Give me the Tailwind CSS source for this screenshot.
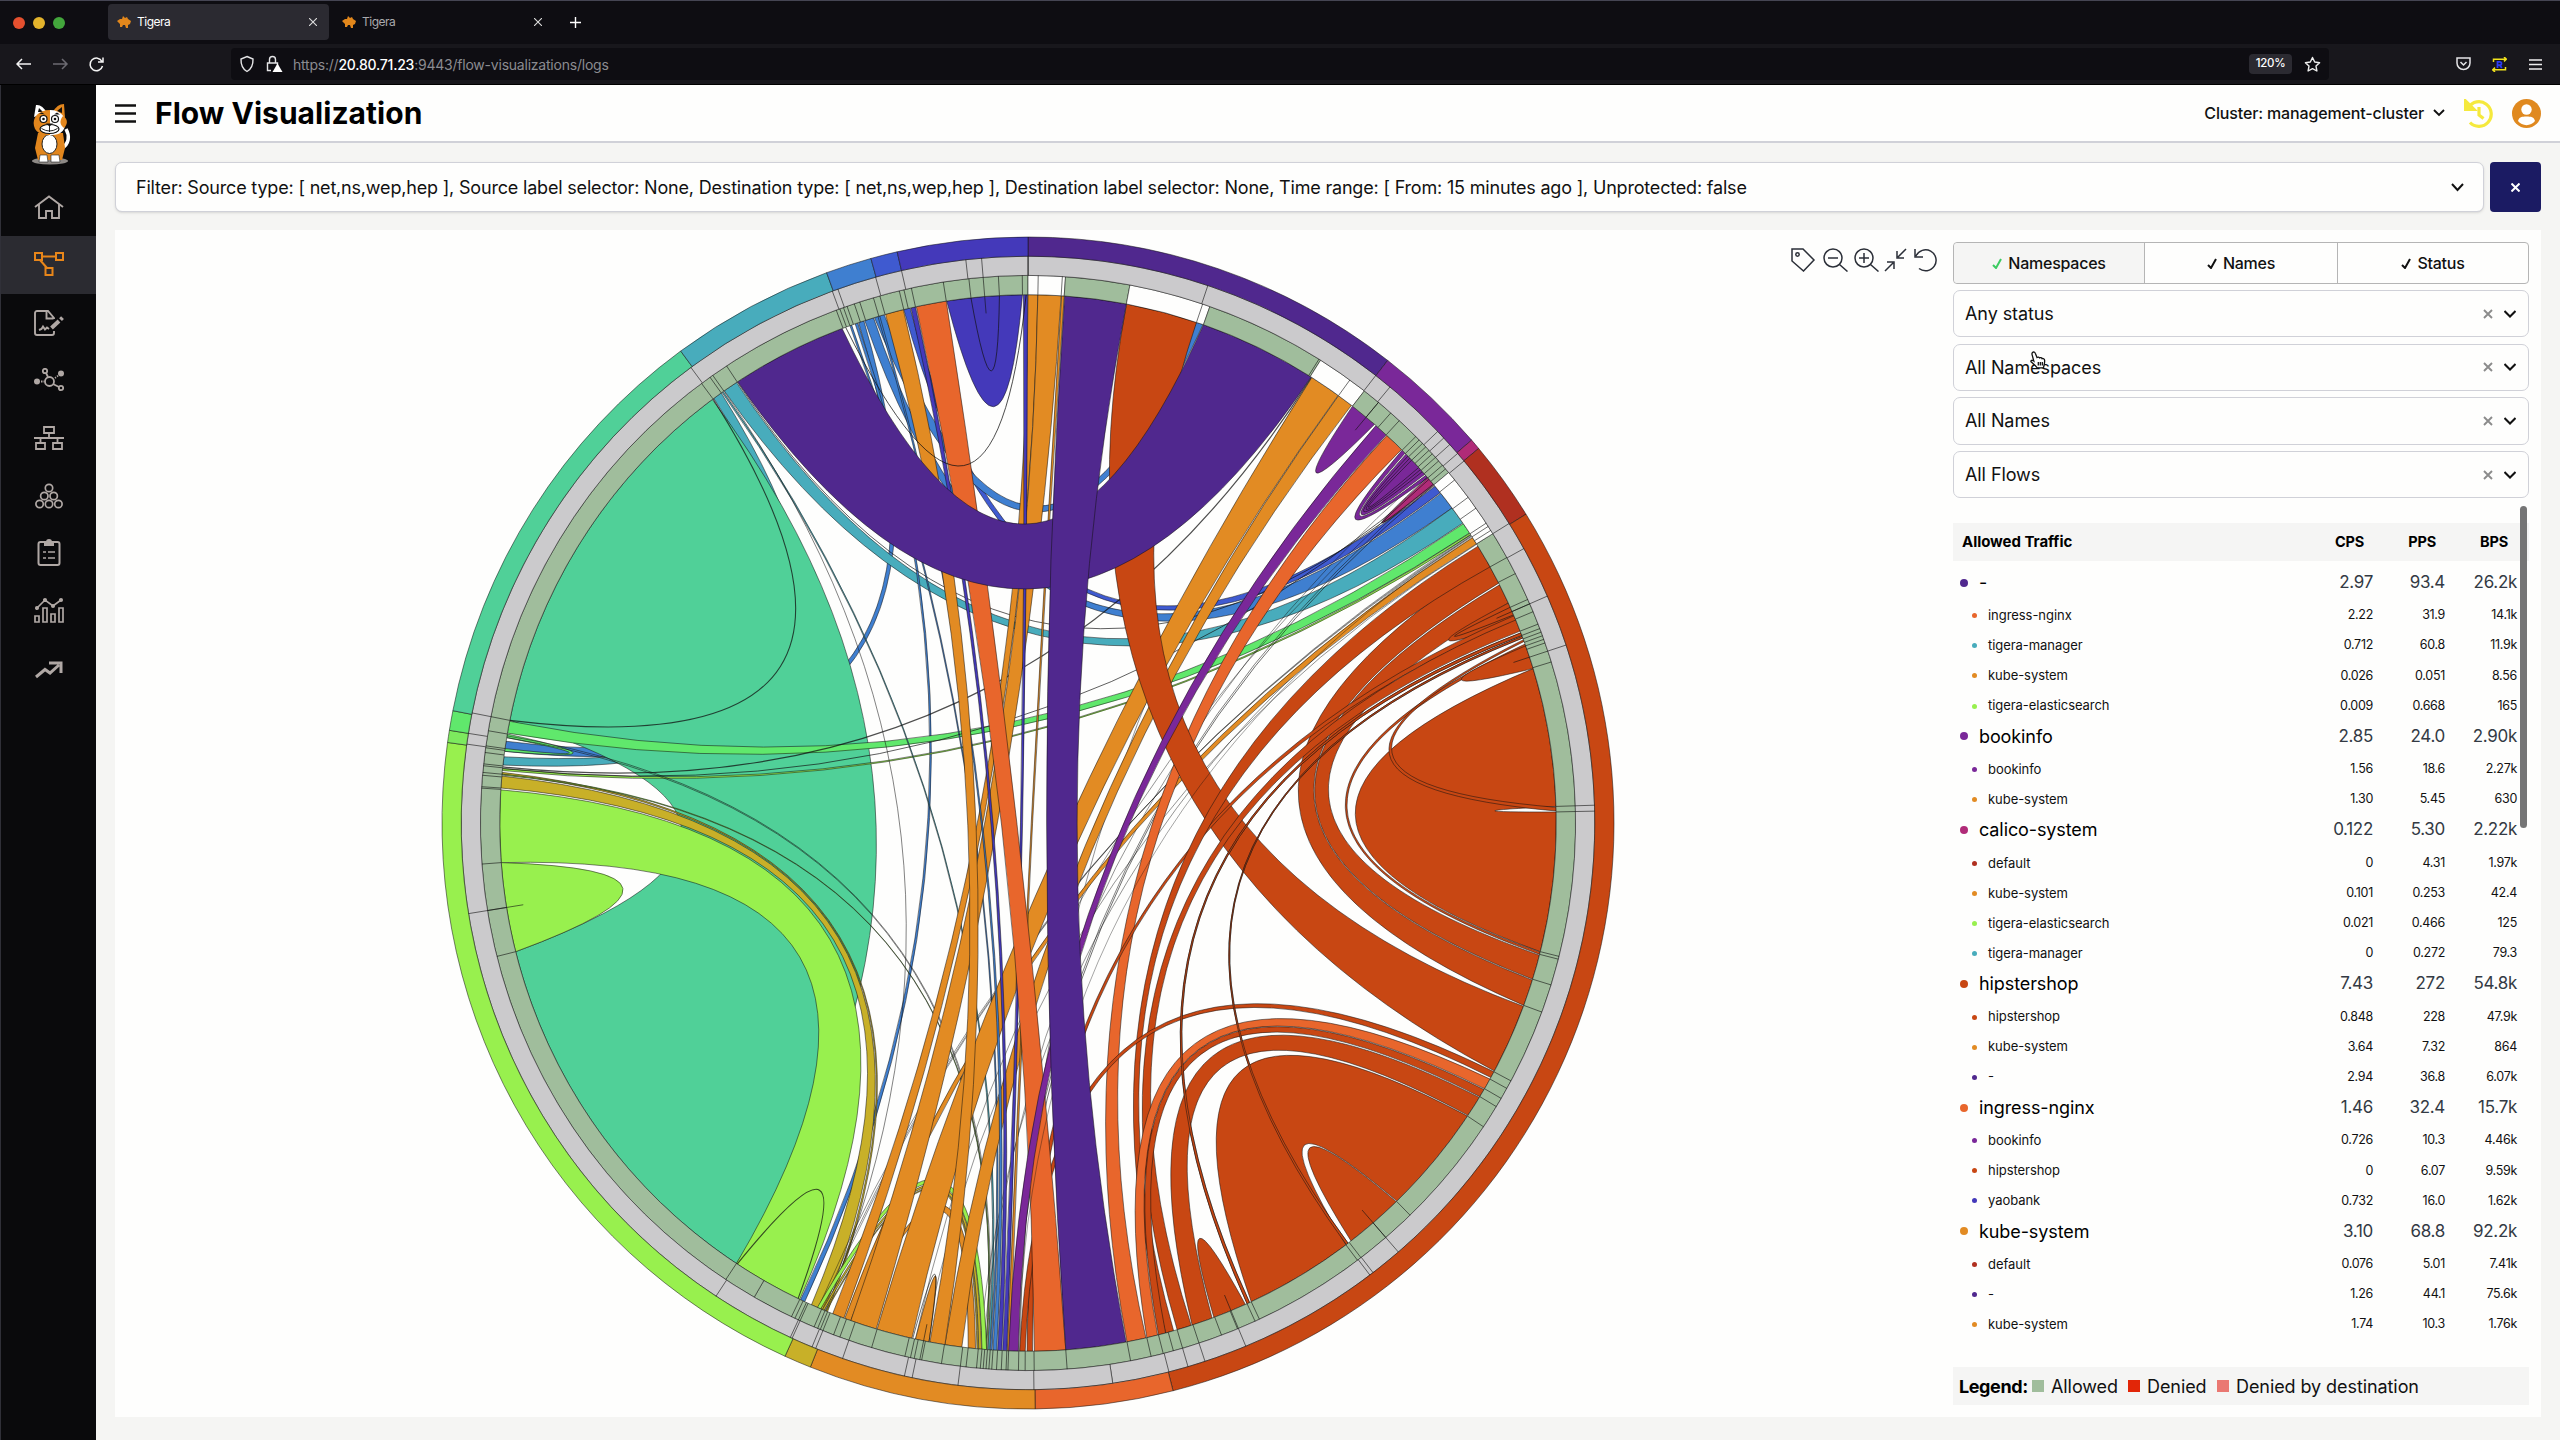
<!DOCTYPE html>
<html lang="en">
<head>
<meta charset="utf-8">
<title>Tigera</title>
<script src="https://cdn.jsdelivr.net/npm/@tailwindcss/browser@4"></script>
</head>
<body class="w-[2560px] h-[1440px] overflow-hidden bg-[#0e0d12] font-['Inter',sans-serif] text-[#111]">
<div class="relative flex flex-col w-[2560px] h-[1440px] border-t border-[#454553]">

  <!-- browser tabs -->
  <div class="flex h-[43px] shrink-0 bg-[#0e0d12] text-[12px] pt-[3px]">
    <div class="flex w-[108px] items-center gap-[8px] pl-[13px] pb-[3px]">
      <span class="size-[12px] rounded-full bg-[#e5502f]"></span><span class="size-[12px] rounded-full bg-[#e3b32c]"></span><span class="size-[12px] rounded-full bg-[#43a63c]"></span>
    </div>
    <div class="flex h-[36px] w-[221px] items-center rounded bg-[#2b2a31] pl-[9px] text-white">
      <svg class="w-[15px] h-[12px]" viewBox="0 0 15 12"><path d="M0 5 3 3 5 3 6 0 8 2 10 1 11 3 14 5 13 8 11 9 11 12H9L8 9 6 9 5 11H3L3 8z" fill="#e2871c"/></svg>
      <span class="ml-[5px] tracking-[-0.5px]">Tigera</span>
      <svg class="ml-auto mr-[12px] size-[8px]" viewBox="0 0 8 8" stroke="#ddd" stroke-width="1.1"><path d="M0 0l8 8M8 0 0 8"/></svg>
    </div>
    <div class="flex h-[36px] w-[225px] items-center pl-[13px] text-[#a9a9ad]">
      <svg class="w-[15px] h-[12px]" viewBox="0 0 15 12"><path d="M0 5 3 3 5 3 6 0 8 2 10 1 11 3 14 5 13 8 11 9 11 12H9L8 9 6 9 5 11H3L3 8z" fill="#e2871c"/></svg>
      <span class="ml-[5px] tracking-[-0.5px]">Tigera</span>
      <svg class="ml-auto mr-[12px] size-[8px]" viewBox="0 0 8 8" stroke="#ddd" stroke-width="1.1"><path d="M0 0l8 8M8 0 0 8"/></svg>
    </div>
    <svg class="ml-[16px] mt-[13px] size-[11px]" viewBox="0 0 11 11" stroke="#fff" stroke-width="1.4"><path d="M5.500 0v11M0 5.500h11"/></svg>
  </div>

  <!-- browser toolbar -->
  <div class="flex h-[41px] shrink-0 items-center border-b border-black bg-[#18171c]">
    <svg class="ml-[16px] w-[90px] h-[18px]" viewBox="0 0 90 18" fill="none" stroke="#f4f4f4" stroke-width="1.5"><path d="M15 9H1M6 4 1 9l5 5"/><path d="M37 9h14M46 4l5 5-5 5" stroke="#6c6b72"/><path d="M86 6.500A6.300 6.300 0 1 0 86.500 11M87 2.500V7h-5"/></svg>
    <div class="ml-[125px] flex h-[32px] w-[2098px] items-center rounded bg-[#0e0d12]">
      <svg class="ml-[8px] w-[46px] h-[18px]" viewBox="0 0 46 18" fill="none" stroke="#e4e4e6" stroke-width="1.400"><path d="M8 1.500 14 4c.2 6-1.500 10-6 12.500C3.500 14 1.800 10 2 4z"/><path d="M32 15.500h-3.500V8h10v3M30.500 8V4.500a3 3 0 0 1 6 0V8"/><path d="M38.500 8.500 43.500 17h-10z" fill="#fff" stroke="none"/></svg>
      <span class="ml-[8px] text-[14px] text-[#8b8b90] tracking-[-0.22px]">https://<span class="font-medium text-white">20.80.71.23</span>:9443/flow-visualizations/logs</span>
      <span class="ml-auto flex h-[20px] w-[43px] items-center justify-center rounded bg-[#2b2a31] text-[11.5px] font-medium tracking-tight text-white">120%</span>
      <svg class="ml-[12px] mr-[8px] size-[17px]" viewBox="0 0 17 17" fill="none" stroke="#eee" stroke-width="1.400" stroke-linejoin="round"><path d="m8.500 1.500 2.200 4.500 4.900.7-3.600 3.400.9 4.900-4.400-2.400L4.100 15l.9-4.900L1.400 6.700 6.300 6z"/></svg>
    </div>
    <svg class="ml-[127px] w-[15px] h-[14px]" viewBox="0 0 15 14" fill="none" stroke="#e4e4e6" stroke-width="1.500"><path d="M1 1h13v5a6.500 6.500 0 0 1-13 0zM4.500 5l3 3 3-3"/></svg>
    <svg class="ml-[21px] w-[15px] h-[15px]" viewBox="0 0 15 15" fill="none" stroke="#f2e31d" stroke-width="1.500"><path d="M1.500 5V2.200h12.500M12 0l2.300 2.200L12 4.400M13.500 10v2.800H1M3 10.600.7 12.800 3 15"/><path d="M5.500 11V4.800h2.300a1.600 1.600 0 0 1 0 3.300H5.500M7.800 8.200l2 2.800" stroke="#2b3df2" stroke-width="1.800"/></svg>
    <svg class="ml-[22px] w-[13px] h-[11px]" viewBox="0 0 13 11" stroke="#eee" stroke-width="1.500"><path d="M0 1h13M0 5.500h13M0 10h13"/></svg>
  </div>

  <div class="flex min-h-0 flex-1">
    <!-- sidebar -->
    <nav class="flex w-[96px] shrink-0 flex-col items-center bg-[#0a0a0c] border-l border-[#303038] text-[#b0a8a5]">
      <svg class="mt-[18px] ml-[4px] w-[44px] h-[62px]" viewBox="0 0 44 62">
        <ellipse cx="21" cy="58" rx="18" ry="3.500" fill="#8d8986"/>
        <path d="M37 26c4 7 3 15-4 19" fill="none" stroke="#fff" stroke-width="3.500"/>
        <path d="M9 30h25l2 15-3 12H9L6 45z" fill="#e2861d"/>
        <ellipse cx="20.500" cy="41" rx="7.500" ry="9.500" fill="#fff" stroke="#222"/>
        <path d="M11 52h7l1 7h-9zM22 52h8l1 7h-9z" fill="#fff" stroke="#222" stroke-width=".6"/>
        <path d="M5 14 7 2q6-1 11 8z" fill="#fff"/><path d="M24 9q4-8 11-8l1 14z" fill="#e2861d"/><path d="M9 9l1-4 4 4zM28 8l5-4v6z" fill="#111"/>
        <path d="M21 7C9 7 3 15 5 23s9 9 16 9z" fill="#e2861d"/><path d="M21 7c11 0 17 8 15 16s-8 9-15 9z" fill="#fff"/><path d="M34 13c5 3 5 8 1 12-4-3-5-7-1-12z" fill="#e2861d"/>
        <g fill="#fff" stroke="#111" stroke-width="1.200"><circle cx="14.500" cy="16" r="3.500"/><circle cx="26" cy="16" r="3.500"/><ellipse cx="20.500" cy="26" rx="9.500" ry="4.500"/></g>
        <g fill="#111"><circle cx="14.500" cy="16" r="1.300"/><circle cx="26" cy="16" r="1.300"/><path d="M17 20.500h7l-3.500 3zM10 10.500l6 1-3-2zM25 11.500h6l-3-2z"/></g>
        <path d="M20.500 23v6M12.500 25.500q8 5 16 0" stroke="#111" fill="none" stroke-width=".9"/>
      </svg>
      <a class="mt-[14px] flex h-[57px] w-full items-center justify-center pb-[2px]"><svg class="w-[30px] h-[24px]" viewBox="0 0 30 24" fill="none" stroke="currentColor" stroke-width="1.900"><path d="M1 12 15 1.500 29 12M5 9.500V23h7v-7h6v7h7V9.500"/></svg></a>
      <a class="flex h-[58px] w-full items-center justify-center bg-[#2b2b31] pb-[2px]"><svg class="w-[30px] h-[24px]" viewBox="0 0 30 24" fill="none" stroke="#e8861a" stroke-width="2"><path d="M1 1h7v7H1zM22 1h7v7h-7zM11.500 16h7v7h-7zM8 4.500h14M6 8l7 8"/></svg></a>
      <a class="flex h-[57px] w-full items-center justify-center"><svg class="w-[30px] h-[26px]" viewBox="0 0 30 26" fill="none" stroke="currentColor" stroke-width="1.900"><path d="M20 9V8l-6-7H3a2 2 0 0 0-2 2v20a2 2 0 0 0 2 2h15a2 2 0 0 0 2-2v-2M12.500 1v7.500h7M5 20l2.500-1 1.500-2.500 2 3 2-2 2 1.500"/><path d="m17.500 18 7.500-7M26.500 9.700l2-2" stroke-width="4"/></svg></a>
      <a class="flex h-[58px] w-full items-center justify-center"><svg class="w-[30px] h-[24px]" viewBox="0 0 30 24" fill="none" stroke="currentColor" stroke-width="1.800"><circle cx="15.500" cy="13.500" r="4.500"/><circle cx="11" cy="3" r="2.200"/><circle cx="27" cy="20" r="2.200"/><path d="M12 5l2 4M19 16l6 3M7 13.500h1.500M9.500 13.500h1M21 10l1-.7M23 8.500l1-.7"/><g fill="currentColor" stroke="none"><circle cx="3" cy="13.500" r="3"/><circle cx="27" cy="5.500" r="3"/></g></svg></a>
      <a class="flex h-[58px] w-full items-center justify-center"><svg class="w-[30px] h-[24px]" viewBox="0 0 30 24" fill="none" stroke="currentColor" stroke-width="1.800"><path d="M10 1h10v6H10zM0 12h30M15 7v5M6.500 12v5M23.500 12v5M2 17h9v6H2zM19 17h9v6h-9z"/></svg></a>
      <a class="flex h-[58px] w-full items-center justify-center"><svg class="w-[28px] h-[26px]" viewBox="0 0 28 26" fill="none" stroke="currentColor" stroke-width="1.700"><circle cx="14" cy="5" r="3.700"/><circle cx="9.300" cy="13" r="3.700"/><circle cx="18.700" cy="13" r="3.700"/><circle cx="4.600" cy="21" r="3.700"/><circle cx="14" cy="21" r="3.700"/><circle cx="23.400" cy="21" r="3.700"/></svg></a>
      <a class="flex h-[55px] w-full items-center justify-center pb-[2px]"><svg class="w-[24px] h-[28px]" viewBox="0 0 24 28" fill="none" stroke="currentColor" stroke-width="2"><rect x="1.500" y="4" width="21" height="23" rx="2"/><path d="M8 4h8v3H8zM10 4a2 2 0 0 1 4 0" fill="currentColor"/><path d="M6 14h3M11 14h7M6 20h3M11 20h7" stroke-width="1.500"/></svg></a>
      <a class="flex h-[60px] w-full items-center justify-center"><svg class="w-[30px] h-[26px]" viewBox="0 0 30 26" fill="none" stroke="currentColor" stroke-width="1.700"><path d="M1 19h4v6H1zM9 11h4v14H9zM17 17h4v8h-4zM25 11h4v14h-4zM3 11l8-8 8 6 8-6"/><g fill="currentColor"><circle cx="3" cy="11" r="1.200"/><circle cx="11" cy="3" r="1.200"/><circle cx="19" cy="9" r="1.200"/><circle cx="27" cy="3" r="1.200"/></g></svg></a>
      <a class="flex h-[60px] w-full items-center justify-center"><svg class="w-[28px] h-[18px]" viewBox="0 0 28 18" fill="none" stroke="currentColor" stroke-width="3"><path d="M1 16 10 8.500l5 3.500L24 4M14 2h12V12"/></svg></a>
    </nav>

    <main class="flex min-w-0 flex-1 flex-col bg-[#f5f5f3]">
      <header class="flex h-[58px] shrink-0 items-center border-b-2 border-[#d0d1d8] bg-[#fefefd] pl-[19px] pr-[19px]">
        <svg class="w-[21px] h-[19px]" viewBox="0 0 21 19" stroke="#111" stroke-width="2.400"><path d="M0 1.500h21M0 9.500h21M0 17.500h21"/></svg>
        <h1 class="ml-[19px] text-[30px] font-bold text-black tracking-[0.030px]">Flow Visualization</h1>
        <span class="ml-auto text-[16px] font-medium tracking-[-0.14px]">Cluster: management-cluster</span>
        <svg class="ml-[9px] w-[12px] h-[8px]" viewBox="0 0 12 8" fill="none" stroke="#111" stroke-width="1.900"><path d="m1 1 5 5 5-5"/></svg>
        <svg class="ml-[19px] size-[29px]" viewBox="0 0 29 29" fill="none" stroke="#f5e93d" stroke-width="3.200"><path d="M4.500 8.500A12.300 12.300 0 1 1 6 23.500M15 8v8l4.500 3.500"/><path d="M1.500 2v8.500H10z" fill="#f5e93d"/></svg>
        <svg class="ml-[19px] size-[29px]" viewBox="0 0 29 29"><circle cx="14.500" cy="14.500" r="14.500" fill="#e0891f"/><circle cx="14.500" cy="10.500" r="5.200" fill="#fff"/><path d="M6 22c1-4 4-4.500 8.500-4.500S22 18 23 22c-4 5.500-13 5.500-17 0z" fill="#fff"/></svg>
      </header>

      <div class="mt-[19px] ml-[19px] mr-[19px] flex h-[50px] shrink-0 justify-between">
        <div class="flex w-[2369px] items-center justify-between rounded-[7px] border border-[#d0d1d8] bg-[#fefefd] pl-[20px] pr-[19px] shadow-sm">
          <span class="text-[18px] tracking-[-0.185px]">Filter: Source type: [ net,ns,wep,hep ], Source label selector: None, Destination type: [ net,ns,wep,hep ], Destination label selector: None, Time range: [ From: 15 minutes ago ], Unprotected: false</span>
          <svg class="w-[13px] h-[9px]" viewBox="0 0 13 9" fill="none" stroke="#111" stroke-width="2"><path d="m1 1 5.500 6L12 1"/></svg>
        </div>
        <div class="flex w-[51px] items-center justify-center rounded-[4px] bg-[#1b1b63]"><svg class="size-[9px]" viewBox="0 0 9 9" stroke="#fff" stroke-width="2"><path d="m.5.500 8 8M8.500.500l-8 8"/></svg></div>
      </div>

      <section class="mt-[18px] ml-[19px] mr-[19px] flex h-[1187px] shrink-0 bg-[#fefefd]">
        <svg id="chart" class="ml-[323px] mt-[3px] size-[1180px] shrink-0" viewBox="-590 -590 1180 1180"></svg>
        <svg class="ml-[173px] mt-[18px] w-[148px] h-[24px] shrink-0" viewBox="0 0 148 24" fill="none" stroke="#2b2f38" stroke-width="1.500">
          <path d="M1 1h11l11 11-10.500 11L1 13z"/><circle cx="6.500" cy="6.500" r="1.700"/>
          <circle cx="42" cy="10" r="9"/><path d="m48.500 16.500 8 7M37 10h10"/>
          <circle cx="73" cy="10" r="9"/><path d="m79.500 16.500 8 7M68 10h10M73 5v10"/>
          <path d="m94 23 8-8M96 14h7v7M115 1l-8 8M106 3v7h7"/>
          <path d="M124 1v8h8M125 8A10.500 10.500 0 1 1 128 20.500"/>
        </svg>
        <aside class="ml-[14px] mt-[12px] flex w-[576px] flex-col">
          <div class="flex h-[42px] shrink-0 rounded-[4px] border border-[#b5b5b5] text-[16px] font-medium tracking-[-0.25px]">
            <div class="flex w-[190px] items-center justify-center gap-[5px] rounded-l-[4px] bg-[#f5f5f4]"><svg class="w-[11px] h-[11px]" viewBox="0 0 11 11" fill="none" stroke="#3ccb62" stroke-width="2"><path d="m1 7 3 3L9 1"/></svg>Namespaces</div>
            <div class="flex w-[194px] items-center justify-center gap-[5px] border-x border-[#b5b5b5]"><svg class="w-[11px] h-[11px]" viewBox="0 0 11 11" fill="none" stroke="#111" stroke-width="2"><path d="m1 7 3 3L9 1"/></svg>Names</div>
            <div class="flex flex-1 items-center justify-center gap-[5px]"><svg class="w-[11px] h-[11px]" viewBox="0 0 11 11" fill="none" stroke="#111" stroke-width="2"><path d="m1 7 3 3L9 1"/></svg>Status</div>
          </div>
          <div id="selects" class="mt-[6px] flex shrink-0 flex-col gap-[6.500px]"></div>
          <div class="mt-[25px] flex h-[38px] shrink-0 items-center bg-[#f5f5f4] pl-[9px] pr-[21px] text-[14.5px] font-bold text-black tracking-[-0.2px]">
            <span class="flex-1 text-[15px] tracking-[-0.050px]">Allowed Traffic</span><span class="w-[72px] text-right">CPS</span><span class="w-[72px] text-right">PPS</span><span class="w-[72px] text-right">BPS</span>
          </div>
          <div id="rows" class="mt-[6px] flex flex-col"></div>
          <div class="mt-auto mb-[12px] flex h-[38px] shrink-0 items-center bg-[#f5f5f4] pl-[6px] text-[18px] tracking-[-0.080px]">
            <span class="w-[73px] font-bold text-black tracking-[-0.4px]">Legend:</span><span class="size-[12px] bg-[#a0bd9c]"></span><span class="ml-[7px] w-[77px]">Allowed</span><span class="size-[12px] bg-[#e22608]"></span><span class="ml-[7px] w-[70px]">Denied</span><span class="size-[12px] bg-[#ea7872]"></span><span class="ml-[7px]">Denied by destination</span>
          </div>
        </aside>
      </section>
    </main>
  </div>

  <div class="absolute left-[2520px] top-[505px] h-[322px] w-[7px] rounded-full bg-[#757575]"></div>
  <svg class="absolute left-[2030px] top-[350px] w-[16px] h-[18px]" viewBox="0 0 16 18" fill="#fff" stroke="#111" stroke-width="1.300"><path d="M3 1.200c1.200-.6 2 .2 2.400 1.300L7 6.500c1-.8 2.200-.5 2.500.4 1-.6 2.200-.2 2.500.7 1.200-.4 2.400.3 2.600 1.600.3 3-.4 4.300-1.200 7.600H7.200C5.500 14.500 3.500 13 1 10.800c-.6-1.300 1.300-2 2.800-.8L2 3.300C1.800 2.300 2.200 1.600 3 1.200zM8.300 11v3.500M10.300 11v3.500M12.300 11v3.500"/></svg>
</div>

<script>
const P='#50288e',BK='#7a2899',MG='#b02b78',DF='#b03020',H='#c84713',I='#e8662c',K='#e28b23',GD='#c8b028',L='#98f04e',G='#60e86c',T='#50d098',M='#48acbc',B='#3f7fd0',B2='#3f5ad0',Y='#4439ba',W='#fefefd';
const R=528.3,R1=547.6,R2=566.8,R3=586;
const pt=(a,r)=>{const t=a*Math.PI/180;return (r*Math.sin(t)).toFixed(2)+' '+(-r*Math.cos(t)).toFixed(2)};
// control radius by half the angle between the two ends: near ends bend early, far ends pass the centre
const bend=[[0,.78],[1.5,.72],[4.2,.58],[10,.39],[15.6,.275],[20,.192],[26,.105],[33,.045],[44,0],[91,0]];
const pull=h=>{for(let i=1;i<bend.length;i++)if(h<=bend[i][0]){const [x,y]=bend[i-1],[u,v]=bend[i];return y+(v-y)*(h-x)/(u-x)}return 0};
const curve=(a,b)=>{let d=b-a;while(d>180)d-=360;while(d<-180)d+=360;return 'Q'+pt(a+d/2,R*pull(Math.abs(d)/2))+' '+pt(b,R)};
const arcTo=(a,b,r)=>'A'+r+' '+r+' 0 '+((Math.abs(b-a)>180)?1:0)+' '+(b>a?1:0)+' '+pt(b,r);
let out='';
const path=(d,f,w=.7)=>{out+=`<path d="${d}" fill="${f}" stroke="#111" stroke-opacity=".75" stroke-width="${w}"/>`};
const rib=(f,a,b,c,d)=>path('M'+pt(a,R)+arcTo(a,b,R)+curve(b,c)+arcTo(c,d,R)+curve(d,a)+'Z',f);
const loop=(f,a,b)=>path('M'+pt(a,R)+arcTo(a,b,R)+curve(b,a)+'Z',f);
const line=(a,b,w=.9)=>path('M'+pt(a,R)+curve(a,b),'none',w);
const ring=(f,a,b,r,q)=>path('M'+pt(a,r)+arcTo(a,b,r)+'L'+pt(b,q)+arcTo(b,a,q)+'Z',f);
const tick=(a,r,q)=>path('M'+pt(a,r)+'L'+pt(a,q),'none',.8);

rib(B,277.8,278.9,341.3,341.9);rib(M,276.3,277.2,323.5,324.5);
rib(T,213.5,255.9,281.2,323.3);line(281.2,323.4,1.1);
rib(G,277.8,278.1,279.3,279.7);
rib(B2,346.4,347.1,50.4,51.3);rib(B,343.1,344.2,18.6,19.35);rib(B,342,343,51.4,53.4);rib(M,324.9,326.5,53.4,55.4);
rib(B,205,205.5,340.9,341.2);
rib(L,205.6,213.5,265.7,273.6);loop(L,255.9,265.7);line(205.8,213.4,1.1);
rib(GD,202.7,204.2,273.8,275.1);rib(GD,202.3,202.5,275.3,275.5);
rib(G,279.8,281.1,55.5,56.7);rib(L,275.7,275.95,56.75,56.95);
rib(M,184.15,184.35,324.6,324.75);rib(B,183.9,184.1,340.3,340.5);
line(324.85,202.6,.7);line(279.5,184.4,.7);line(279.3,184.6,.7);rib(L,184.5,184.6,275.2,275.3);
line(32.45,276.1,1.2);line(49.6,275.9,.9);line(326.6,50,.9);
line(56.9,202.9,.6);line(57.0,203.1,.6);line(57.1,203.4,.6);line(57.1,185.3,.6);line(58.15,191.3,.6);line(50.2,181.2,.8);line(49.9,181.6,.7);line(49.5,192.3,.6);line(48.7,184.9,.6);line(32.5,180.9,.6);
rib(L,184.5,185,203.1,203.5);rib(GD,185.05,185.35,202.7,202.9);rib(GD,185.4,185.55,202.45,202.55);rib(K,185.7,186.5,199.2,199.6);
rib(K,57.3,58.1,199.6,200.3);
rib(K,36,37.75,187.2,189.05);rib(K,32.5,35.95,192.7,196.6);
rib(K,3.65,3.93,181.95,182.25);
rib(K,0,1.07,200.4,201.7);rib(K,1.07,3.6,196.7,199.6);
loop(K,190.8,192.3);line(190.8,192.6,.8);
rib(Y,359.5,359.95,182.3,182.75);rib(Y,347.2,347.7,182.85,183.3);rib(B,183.4,183.8,343.5,343.7);
rib(K,344.35,346.35,189.05,190.7);
rib(I,42.8,45,167.1,169.2);
// hipstershop
rib(H,10.75,18.6,110.3,118);
rib(H,60.4,63,107.3,110.2);rib(H,63.2,65.4,104.5,107.2);
loop(H,65.4,67.6);line(65.9,66.8,.8);
rib(H,66.9,67.5,179.5,180.1);rib(H,58.4,61,164,164.9);
rib(H,67.4,68.7,162,163.6);rib(H,68.9,69.2,155.2,155.5);rib(H,69.3,69.5,142.7,142.95);
rib(H,118.1,118.8,180.3,180.9);rib(I,119,120.2,165.8,167);rib(H,120.3,121.2,164.9,165.7);rib(H,121.3,123.6,159.6,161.9);
rib(H,123.7,135.7,143,155);loop(H,135.8,142.3);loop(H,155.7,159.4);
rib(H,73,88.2,88.8,104.1);rib(H,70.2,70.5,104.15,104.4);loop(H,70.4,73);
rib(H,69.7,69.9,88.3,88.7);
rib(H,68.9,69.2,155.2,155.5);rib(H,69.3,69.5,142.7,142.95);
loop(Y,351.15,359.4);line(353.8,356.9);
rib(I,347.8,351.1,175.9,179.3);
loop(BK,37.9,41);
rib(BK,41.2,42.7,181.05,182.1);
loop(BK,45.1,49.2);loop(W,45.55,48.85);loop(BK,45.7,48.7);for(const [a,b] of [[46,48.3],[46.3,48],[46.6,47.7]])line(a,b,.8);
loop(MG,49.2,50.2);line(49.1,50.3,.8);line(49.4,50.1,.8);line(57.2,181,.5);
rib(P,326.65,339.4,19.4,32.4);
rib(P,3.98,10.73,169.3,175.9);
line(339.8,359.8,1);

// status ring
ring('#a0bd9c',58.1,210,R1,R);ring('#a0bd9c',210,360,R1,R);
ring(W,0,3.93,R1,R);ring('#a0bd9c',3.93,10.73,R1,R);ring(W,10.73,19.4,R1,R);ring('#a0bd9c',19.4,32.3,R1,R);ring(W,32.3,37.9,R1,R);ring('#a0bd9c',37.9,50.2,R1,R);ring(W,50.2,58.1,R1,R);
// names ring
ring('#cbcacc',0,171.4,R2,R1);ring('#cbcacc',171.4,360,R2,R1);
// namespaces ring
let s=0;for(const [e,c] of [[37.87,P],[49.2,BK],[50.27,MG],[58.2,DF],[165.67,H],[179.3,I],[201.8,K],[204.5,GD],[277.9,L],[279.1,'#7dea5e'],[281.05,G],[323.65,T],[339.9,M],[344.45,B],[347.1,B2],[360,Y]]){ring(c,s,e,R3,R2);s=e}
for(const a of [1.07,3.6,18.6,32.1,36,39.8,41.5,42.7,45.1,45.6,46.1,46.6,47.1,47.6,48.1,48.6,49.2,49.7,51.2,53.5,54.9,56.8,57.2,57.7,61,62.9,65.9,66.4,67.3,68.7,69.2,69.6,70,70.4,70.8,72.9,88.2,88.8,104.1,104.4,107.2,110.2,118.1,119,120.2,121.2,123.7,135.75,139.2,142.55,143,155,155.5,157.5,159.3,161.8,163.6,164.6,165.7,167,169.2,175.9,179.35,180.3,181,182.1,182.3,182.8,183.3,183.8,184.1,184.4,184.7,185,185.4,186.5,187.1,189.1,191.2,192,192.4,193,196.6,199.1,200.1,200.8,202,202.3,202.6,203,204.6,204.8,205.2,205.6,213.5,255.9,260.8,265.7,273.65,273.8,275,275.3,276,276.2,277.4,277.9,278.1,279.7,281.2,323.4,324.5,324.85,326.6,339.5,339.9,340.3,340.7,341.5,342.1,343.6,344.3,346.4,346.9,347.7,351.1,353.8,356.9,359.4])tick(a,R,R1);
for(const a of [18.5,37.85,39.7,46.3,47.2,48.1,49.3,50.3,58.1,61.04,66.4,71.7,88.2,88.8,139.2,142.5,142.9,157.4,161.8,163.6,165.6,179.4,187.1,191.8,192.6,199.1,202,202.4,204.6,204.8,213.4,260.8,278,279.1,281.2,323.5,339.8,340.4,344.4,347.1,353.7,355.3,0])tick(a,R1,R2);
for(const a of [39.8,66.4,71.7,139.2,157.4,191.4,260.8,355.3])tick(a,R1,R-17);
document.getElementById('chart').innerHTML=out;

document.getElementById('selects').innerHTML=['Any status','All Namespaces','All Names','All Flows'].map(t=>`<div class="flex h-[47.200px] items-center rounded-[7px] border border-[#d0d1d8] bg-[#fefefd] pl-[11px] pr-[12px] text-[18px] tracking-[-0.080px]"><span class="flex-1">${t}</span><svg class="mr-[11px] size-[10px]" viewBox="0 0 10 10" stroke="#8b8b8b" stroke-width="1.900"><path d="m1 1 8 8M9 1 1 9"/></svg><svg class="w-[12px] h-[8px]" viewBox="0 0 12 8" fill="none" stroke="#111" stroke-width="2"><path d="m.5 1 5.500 5.500L11.500 1"/></svg></div>`).join('');

const rows=[[1,P,'-','2.97','93.4','26.2k'],[0,I,'ingress-nginx','2.22','31.9','14.1k'],[0,M,'tigera-manager','0.712','60.8','11.9k'],[0,K,'kube-system','0.026','0.051','8.56'],[0,L,'tigera-elasticsearch','0.009','0.668','165'],
[1,BK,'bookinfo','2.85','24.0','2.90k'],[0,BK,'bookinfo','1.56','18.6','2.27k'],[0,K,'kube-system','1.30','5.45','630'],
[1,MG,'calico-system','0.122','5.30','2.22k'],[0,DF,'default','0','4.31','1.97k'],[0,K,'kube-system','0.101','0.253','42.4'],[0,L,'tigera-elasticsearch','0.021','0.466','125'],[0,M,'tigera-manager','0','0.272','79.3'],
[1,H,'hipstershop','7.43','272','54.8k'],[0,H,'hipstershop','0.848','228','47.9k'],[0,K,'kube-system','3.64','7.32','864'],[0,P,'-','2.94','36.8','6.07k'],
[1,I,'ingress-nginx','1.46','32.4','15.7k'],[0,BK,'bookinfo','0.726','10.3','4.46k'],[0,H,'hipstershop','0','6.07','9.59k'],[0,Y,'yaobank','0.732','16.0','1.62k'],
[1,K,'kube-system','3.10','68.8','92.2k'],[0,DF,'default','0.076','5.01','7.41k'],[0,P,'-','1.26','44.1','75.6k'],[0,K,'kube-system','1.74','10.3','1.76k']];
document.getElementById('rows').innerHTML=rows.map(([m,c,n,...v])=>m
?`<div class="flex h-[33.500px] items-center pb-[3px] pl-[7px] pr-[12px] text-[18px] tracking-[-0.1px]"><span class="mr-[11px] size-[8px] rounded-full" style="background:${c}"></span><span class="flex-1 text-black">${n}</span>${v.map(x=>`<span class="w-[72px] text-right text-[17px] text-[#333a44] tracking-[-0.3px]">${x}</span>`).join('')}</div>`
:`<div class="flex h-[30.080px] items-center pl-[19px] pr-[12px] text-[13px] tracking-[-0.05px]"><span class="mr-[11px] size-[5px] rounded-full" style="background:${c}"></span><span class="flex-1">${n}</span>${v.map(x=>`<span class="w-[72px] text-right text-[12.5px] tracking-[-0.3px]">${x}</span>`).join('')}</div>`).join('');
</script>
</body>
</html>
